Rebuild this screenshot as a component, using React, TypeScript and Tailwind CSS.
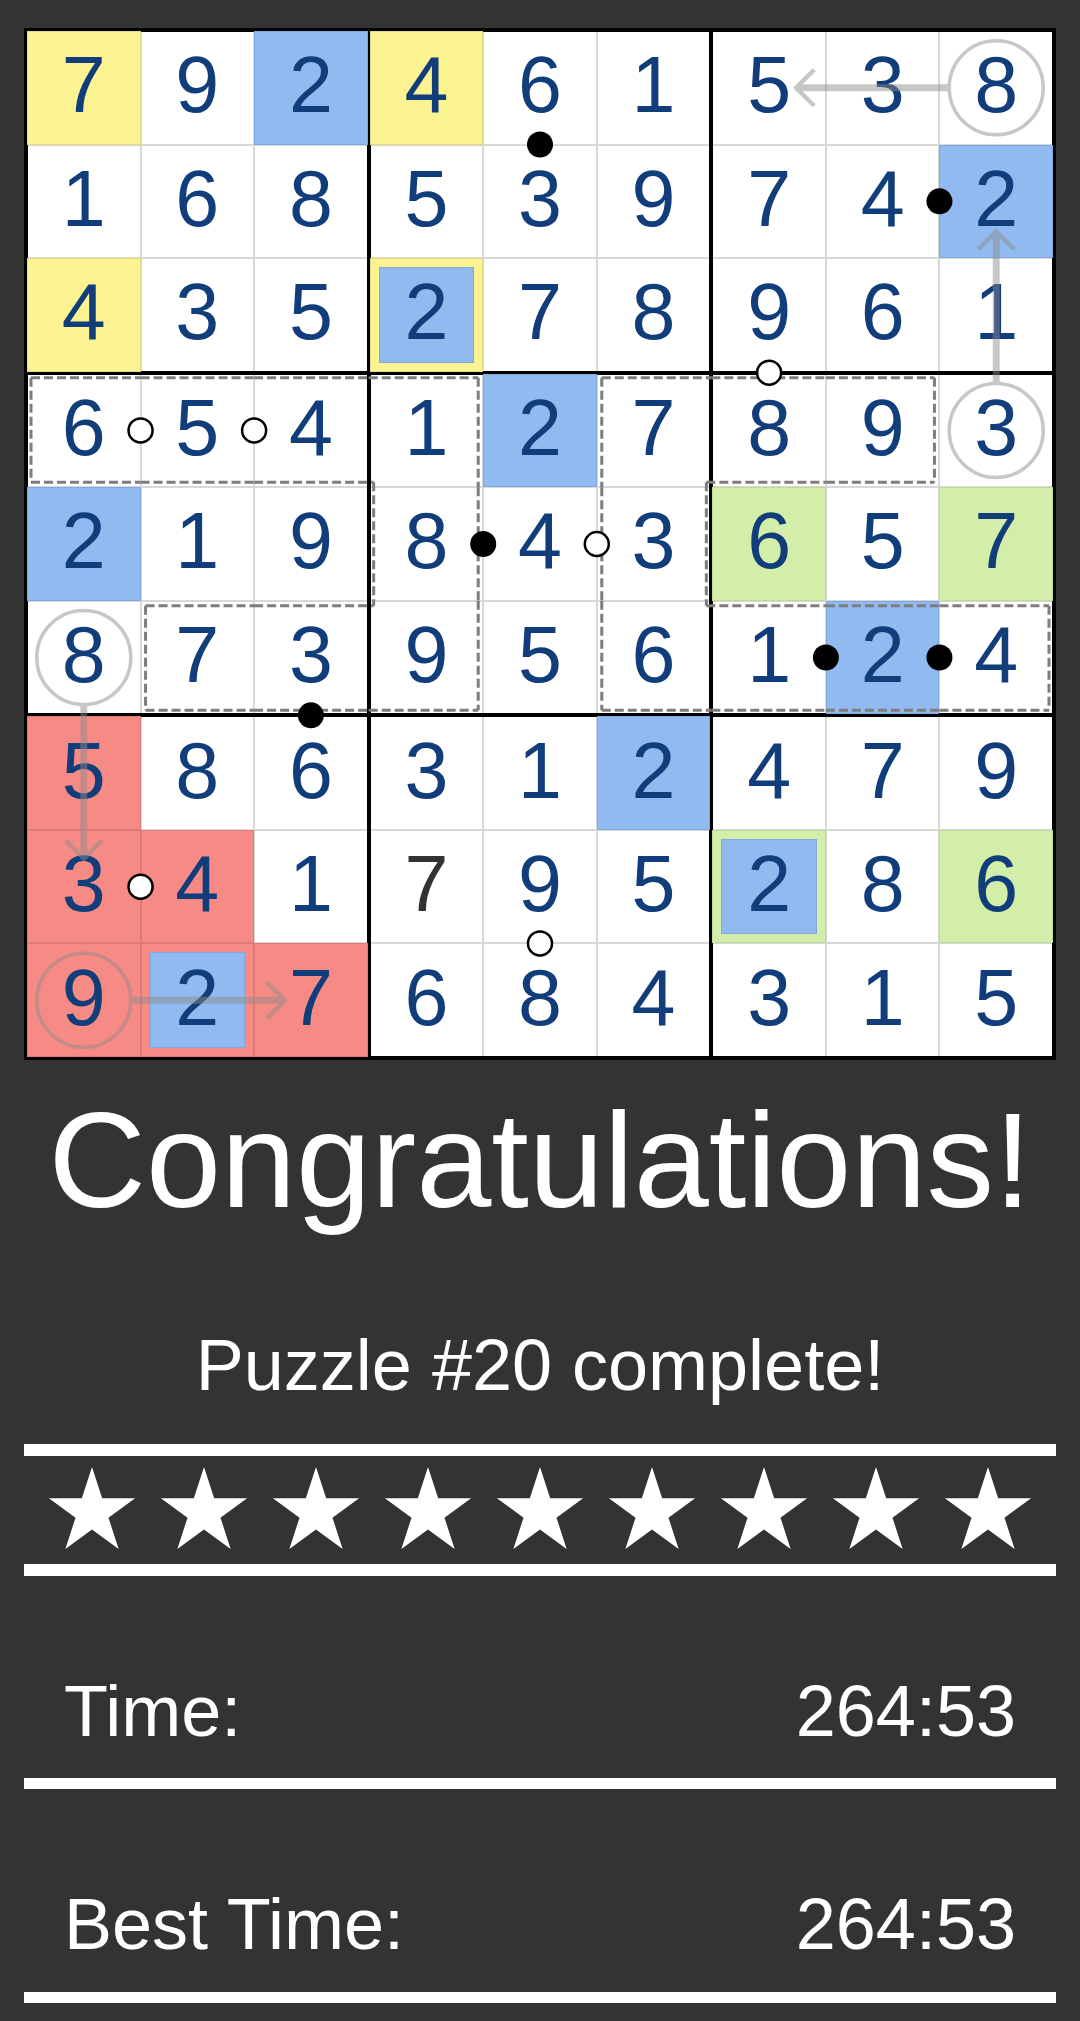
import React from 'react';

type Tint = 'yellow' | 'green' | 'red' | null;

const DIGITS = [
  '792461538',
  '168539742',
  '435278961',
  '654127893',
  '219843657',
  '873956124',
  '586312479',
  '341795286',
  '927684315',
];

// cell tints by "row,col"
const TINTS: Record<string, Tint> = {
  '0,0': 'yellow', '0,3': 'yellow', '2,0': 'yellow', '2,3': 'yellow',
  '4,6': 'green', '4,8': 'green', '7,6': 'green', '7,8': 'green',
  '6,0': 'red', '7,0': 'red', '7,1': 'red', '8,0': 'red', '8,1': 'red', '8,2': 'red',
};

const SELECTED = new Set(['0,2', '1,8', '2,3', '3,4', '4,0', '5,7', '6,5', '7,6', '8,1']);
const GIVEN = new Set(['7,3']);

const TINT_CLASS: Record<string, string> = {
  yellow: 'bg-[#fbf391] shadow-[0_0_0_1px_#e4db86]',
  green: 'bg-[#d2eea9] shadow-[0_0_0_1px_#bedb9b]',
  red: 'bg-[#f68a85] shadow-[0_0_0_1px_#de7b77]',
  blue: 'bg-[#90baf0] shadow-[0_0_0_1px_#7fa8e0]',
  none: 'bg-white',
};

// geometry of the 1024px board interior (4px box lines, 2px cell lines)
const BOX = (1024 - 8) / 3;
const CELL = (BOX - 4) / 3;
const start = (i: number) => Math.floor(i / 3) * (BOX + 4) + (i % 3) * (CELL + 2);
const center = (i: number) => start(i) + CELL / 2;
const edge = (i: number) => (i === 0 ? -2 : i === 9 ? 1026 : (start(i - 1) + CELL + start(i)) / 2);

const CAGES: [number, number][][] = [
  [[3, 0], [3, 1], [3, 2], [3, 3], [4, 3], [5, 3], [5, 2], [5, 1]],
  [[3, 5], [3, 6], [3, 7], [4, 5], [5, 5], [5, 6], [5, 7], [5, 8]],
];

// kropki dots: [r1, c1, r2, c2, black?]
const DOTS: [number, number, number, number, boolean][] = [
  [0, 4, 1, 4, true],
  [1, 7, 1, 8, true],
  [4, 3, 4, 4, true],
  [5, 2, 6, 2, true],
  [5, 6, 5, 7, true],
  [5, 7, 5, 8, true],
  [3, 0, 3, 1, false],
  [3, 1, 3, 2, false],
  [2, 6, 3, 6, false],
  [4, 4, 4, 5, false],
  [7, 0, 7, 1, false],
  [7, 4, 8, 4, false],
];

function cageSegments(cells: [number, number][]) {
  const has = (r: number, c: number) => cells.some(([a, b]) => a === r && b === c);
  const d = 5;
  const segs: string[] = [];
  for (const [r, c] of cells) {
    const L = edge(c), R = edge(c + 1), T = edge(r), B = edge(r + 1);
    if (!has(r - 1, c)) {
      const x1 = !has(r, c - 1) ? L + d : has(r - 1, c - 1) ? L - d : L;
      const x2 = !has(r, c + 1) ? R - d : has(r - 1, c + 1) ? R + d : R;
      segs.push(`M${x1} ${T + d}H${x2}`);
    }
    if (!has(r + 1, c)) {
      const x1 = !has(r, c - 1) ? L + d : has(r + 1, c - 1) ? L - d : L;
      const x2 = !has(r, c + 1) ? R - d : has(r + 1, c + 1) ? R + d : R;
      segs.push(`M${x1} ${B - d}H${x2}`);
    }
    if (!has(r, c - 1)) {
      const y1 = !has(r - 1, c) ? T + d : has(r - 1, c - 1) ? T - d : T;
      const y2 = !has(r + 1, c) ? B - d : has(r + 1, c - 1) ? B + d : B;
      segs.push(`M${L + d} ${y1}V${y2}`);
    }
    if (!has(r, c + 1)) {
      const y1 = !has(r - 1, c) ? T + d : has(r - 1, c + 1) ? T - d : T;
      const y2 = !has(r + 1, c) ? B - d : has(r + 1, c + 1) ? B + d : B;
      segs.push(`M${R - d} ${y1}V${y2}`);
    }
  }
  return segs;
}

function Cell({ r, c }: { r: number; c: number }) {
  const key = `${r},${c}`;
  const tint = TINTS[key] ?? null;
  const selected = SELECTED.has(key);
  const bg = tint ? TINT_CLASS[tint] : selected ? TINT_CLASS.blue : TINT_CLASS.none;

  return (
    <div className={`relative flex items-center justify-center pb-[6px] ${bg}`}>
      {tint && selected && (
        <div className="absolute inset-[9px] bg-[#90baf0] shadow-[0_0_0_1px_#80a9e0]" />
      )}
      <span
        className={`relative text-[79px] leading-none ${
          GIVEN.has(key) ? 'text-[#333333]' : 'text-[#113d7b]'
        }`}
      >
        {DIGITS[r][c]}
      </span>
    </div>
  );
}

function Overlay() {
  const R = 47;
  const head = 18;
  // arrow 1: r1c9 -> left to r1c7
  const a1y = center(0), a1cx = center(8), a1tip = center(6) + 27;
  // arrow 2: r4c9 -> up to r2c9
  const a2x = center(8), a2cy = center(3), a2tip = center(1) + 30;
  // arrow 3: r6c1 -> down to r8c1
  const a3x = center(0), a3cy = center(5), a3tip = center(7) - 28;
  // arrow 4: r9c1 -> right to r9c3
  const a4y = center(8), a4cx = center(0), a4tip = center(2) - 26;

  return (
    <svg
      className="absolute inset-0 pointer-events-none"
      width={1024}
      height={1024}
      viewBox="0 0 1024 1024"
    >
      {CAGES.map((cage, i) => (
        <g key={i} stroke="#7d7d7d" strokeWidth={3} strokeDasharray="9 4" fill="none">
          {cageSegments(cage).map((d, j) => (
            <path key={j} d={d} />
          ))}
        </g>
      ))}

      <g opacity={0.48} stroke="#8c8c8c" fill="none" strokeLinejoin="miter">
        <circle cx={a1cx} cy={a1y} r={R} strokeWidth={3.5} />
        <path d={`M${a1cx - R} ${a1y}H${a1tip}`} strokeWidth={7} />
        <path d={`M${a1tip + head} ${a1y - head}L${a1tip} ${a1y}L${a1tip + head} ${a1y + head}`} strokeWidth={4.5} />

        <circle cx={a2x} cy={a2cy} r={R} strokeWidth={3.5} />
        <path d={`M${a2x} ${a2cy - R}V${a2tip}`} strokeWidth={7} />
        <path d={`M${a2x - head} ${a2tip + head}L${a2x} ${a2tip}L${a2x + head} ${a2tip + head}`} strokeWidth={4.5} />

        <circle cx={a3x} cy={a3cy} r={R} strokeWidth={3.5} />
        <path d={`M${a3x} ${a3cy + R}V${a3tip}`} strokeWidth={7} />
        <path d={`M${a3x - head} ${a3tip - head}L${a3x} ${a3tip}L${a3x + head} ${a3tip - head}`} strokeWidth={4.5} />

        <circle cx={a4cx} cy={a4y} r={R} strokeWidth={3.5} />
        <path d={`M${a4cx + R} ${a4y}H${a4tip}`} strokeWidth={7} />
        <path d={`M${a4tip - head} ${a4y - head}L${a4tip} ${a4y}L${a4tip - head} ${a4y + head}`} strokeWidth={4.5} />
      </g>

      {DOTS.map(([r1, c1, r2, c2, black], i) => {
        const cx = c1 === c2 ? center(c1) : edge(c2);
        const cy = r1 === r2 ? center(r1) : edge(r2);
        return black ? (
          <circle key={i} cx={cx} cy={cy} r={13} fill="#000" />
        ) : (
          <circle key={i} cx={cx} cy={cy} r={12} fill="#fff" stroke="#000" strokeWidth={2.5} />
        );
      })}
    </svg>
  );
}

function Board() {
  return (
    <div className="relative ml-[24px] h-[1032px] w-[1032px] border-4 border-black bg-black">
      <div className="grid h-full w-full grid-cols-3 grid-rows-3 gap-[4px]">
        {Array.from({ length: 9 }, (_, b) => (
          <div key={b} className="grid grid-cols-3 grid-rows-3 gap-[2px] bg-[#d8d8d8]">
            {Array.from({ length: 9 }, (_, k) => {
              const r = Math.floor(b / 3) * 3 + Math.floor(k / 3);
              const c = (b % 3) * 3 + (k % 3);
              return <Cell key={k} r={r} c={c} />;
            })}
          </div>
        ))}
      </div>
      <Overlay />
    </div>
  );
}

function Star() {
  const cx = 56, cy = 45.3, R = 45.3, r = R * 0.382;
  const pts = Array.from({ length: 10 }, (_, i) => {
    const ang = ((-90 + i * 36) * Math.PI) / 180;
    const rad = i % 2 === 0 ? R : r;
    return `${(cx + rad * Math.cos(ang)).toFixed(2)},${(cy + rad * Math.sin(ang)).toFixed(2)}`;
  }).join(' ');
  return (
    <svg width={112} height={82} viewBox="0 0 112 82">
      <polygon points={pts} fill="#fff" />
    </svg>
  );
}

function Divider({ thick = false }: { thick?: boolean }) {
  return <div className={`mx-[24px] bg-white ${thick ? 'h-[12px]' : 'h-[11px]'}`} />;
}

export default function App() {
  return (
    <div className="min-h-screen bg-[#333333] pt-[28px] font-['Liberation_Sans',Arial,sans-serif] text-white">
      <Board />

      <h1 className="mt-[33px] text-center text-[135px] leading-none">Congratulations!</h1>
      <p className="mt-[101px] mb-[43px] text-center text-[72px] leading-none">Puzzle #20 complete!</p>

      <Divider thick />
      <div className="mt-[11px] mb-[15px] flex justify-center">
        {Array.from({ length: 9 }, (_, i) => (
          <Star key={i} />
        ))}
      </div>
      <Divider thick />

      <div className="mx-[24px] mt-[99px] mb-[31px] flex justify-between px-10 text-[72px] leading-none">
        <span>Time:</span>
        <span>264:53</span>
      </div>
      <Divider />

      <div className="mx-[24px] mt-[99px] mb-[32px] flex justify-between px-10 text-[72px] leading-none">
        <span>Best Time:</span>
        <span>264:53</span>
      </div>
      <Divider />
    </div>
  );
}
